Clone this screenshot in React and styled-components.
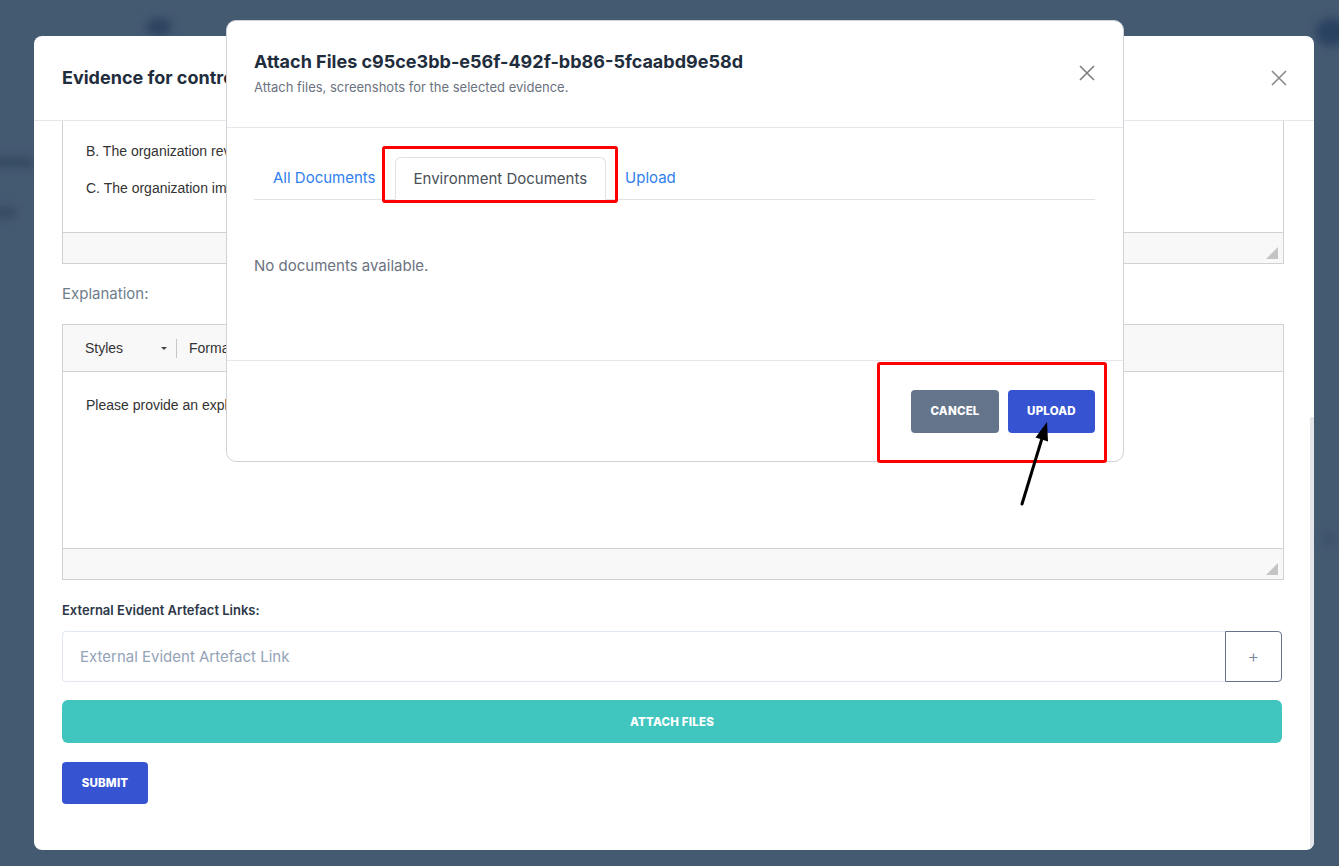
import React from "react";
import styled, { createGlobalStyle } from "styled-components";

const GlobalStyle = createGlobalStyle`
  html, body {
    margin: 0;
    padding: 0;
  }
  body {
    font-family: Inter, "Noto Sans", sans-serif;
    background: #445a71;
    overflow: hidden;
  }
  * {
    box-sizing: border-box;
  }
`;

const Backdrop = styled.div`
  position: relative;
  width: 1339px;
  height: 866px;
  background: #445a71;
  overflow: hidden;
  padding: 36px 0 0 34px;
`;

const Smudge = styled.span`
  position: absolute;
  top: ${(p) => p.top}px;
  left: ${(p) => p.left}px;
  width: ${(p) => p.w}px;
  height: ${(p) => p.h}px;
  border-radius: ${(p) => (p.round ? "50%" : "4px")};
  background: ${(p) => p.color || "#2f465e"};
  filter: blur(4px);
`;

/* ---------- evidence sheet (behind) ---------- */

const Sheet = styled.section`
  position: relative;
  width: 1280px;
  height: 814px;
  background: #fff;
  border-radius: 8px;
  display: flex;
  flex-direction: column;
  overflow: hidden;
`;

const SheetHeader = styled.header`
  height: 85px;
  flex-shrink: 0;
  border-bottom: 1px solid #e5e7eb;
  display: flex;
  align-items: center;
  justify-content: space-between;
  padding: 0 27px 0 28px;
`;

const SheetTitle = styled.h2`
  margin: 0;
  font-size: 18px;
  line-height: 24px;
  font-weight: 700;
  color: #1f2d3d;
`;

const CloseButton = styled.button`
  border: 0;
  background: none;
  padding: 0;
  width: 16px;
  height: 16px;
  display: flex;
  cursor: pointer;
  margin-top: ${(p) => p.offset || 0}px;
`;

const SheetBody = styled.div`
  flex: 1;
  display: flex;
  flex-direction: column;
  padding: 0 30px 0 28px;
`;

const Scrollbar = styled.div`
  position: absolute;
  left: 1276px;
  top: 381px;
  bottom: 0;
  width: 5px;
  background: #e5e5ea;
  border-radius: 2px 2px 0 0;
`;

const Editor = styled.div`
  border: 1px solid #d1d1d1;
  border-top: ${(p) => (p.cut ? "none" : "1px solid #d1d1d1")};
  display: flex;
  flex-direction: column;
`;

const Toolbar = styled.div`
  height: 47px;
  background: #f8f8f8;
  border-bottom: 1px solid #d1d1d1;
  display: flex;
  align-items: center;
  padding-left: 22px;
  font-family: "Liberation Sans", Arial, sans-serif;
  font-size: 14px;
  color: #333;
`;

const Combo = styled.div`
  display: flex;
  align-items: center;
  width: ${(p) => p.w}px;
  justify-content: space-between;
  padding-right: 9px;
`;

const Caret = styled.span`
  width: 0;
  height: 0;
  border-left: 3px solid transparent;
  border-right: 3px solid transparent;
  border-top: 3px solid #444;
`;

const ToolSep = styled.span`
  width: 1px;
  height: 19px;
  background: #c7c7c7;
  margin: 0 12px 0 0;
`;

const EditArea = styled.div`
  height: ${(p) => p.h}px;
  padding: ${(p) => p.pt}px 23px 0;
  display: flex;
  flex-direction: column;
  gap: 17px;
  font-family: "Liberation Sans", Arial, sans-serif;
  font-size: 14px;
  line-height: 20px;
  color: #333;
`;

const Para = styled.p`
  margin: 0;
`;

const StatusBar = styled.div`
  height: 31px;
  background: #f8f8f8;
  border-top: 1px solid #d1d1d1;
  display: flex;
  justify-content: flex-end;
  align-items: flex-end;
  padding: 0 5px 4px 0;
`;

const FieldLabel = styled.div`
  margin: ${(p) => p.m};
  font-size: ${(p) => (p.strong ? 13 : 15)}px;
  line-height: ${(p) => (p.strong ? 18 : 20)}px;
  font-weight: ${(p) => (p.strong ? 600 : 400)};
  color: ${(p) => (p.strong ? "#2d3748" : "#6f7d8c")};
`;

const LinkRow = styled.div`
  display: flex;
  height: 51px;
  margin-right: 2px;
`;

const LinkInput = styled.input`
  flex: 1;
  border: 1px solid #e2e8f0;
  border-right: none;
  border-radius: 4px 0 0 4px;
  padding: 0 17px;
  font-family: Inter, sans-serif;
  font-size: 15px;
  color: #2d3748;
  outline: none;
  &::placeholder {
    color: #94a3b8;
  }
`;

const AddButton = styled.button`
  width: 57px;
  border: 1px solid #64748b;
  border-radius: 0 4px 4px 0;
  background: #fff;
  color: #7a8699;
  font-size: 18px;
  font-family: Inter, sans-serif;
  font-weight: 300;
  cursor: pointer;
`;

const SolidButton = styled.button`
  border: 0;
  border-radius: ${(p) => p.radius || 4}px;
  background: ${(p) => p.bg};
  color: #fff;
  font-family: Inter, sans-serif;
  font-size: 11.5px;
  font-weight: 800;
  letter-spacing: 0.2px;
  height: ${(p) => p.h || 43}px;
  width: ${(p) => (p.w ? `${p.w}px` : "auto")};
  margin: ${(p) => p.m || 0};
  cursor: pointer;
`;

/* ---------- attach dialog (front) ---------- */

const Dialog = styled.div`
  position: absolute;
  top: 20px;
  left: 226px;
  width: 898px;
  height: 442px;
  background: #fff;
  border: 1px solid #cfd2d6;
  border-radius: 10px;
  display: flex;
  flex-direction: column;
`;

const DialogHeader = styled.header`
  height: 107px;
  flex-shrink: 0;
  border-bottom: 1px solid #e5e7eb;
  padding: 29px 28px 0 27px;
  display: flex;
  justify-content: space-between;
  align-items: flex-start;
`;

const DialogTitle = styled.h3`
  margin: 0;
  font-size: 18px;
  line-height: 24px;
  font-weight: 700;
  color: #1f2d3d;
`;

const DialogSub = styled.p`
  margin: 4px 0 0;
  font-size: 13px;
  line-height: 18px;
  color: #6b7280;
`;

const DialogBody = styled.div`
  flex: 1;
  padding: 29px 28px 0 27px;
`;

const Tabs = styled.nav`
  display: flex;
  align-items: flex-end;
  height: 43px;
  border-bottom: 1px solid #dee2e6;
`;

const Tab = styled.button`
  height: ${(p) => (p.active ? 43 : 42)}px;
  margin-bottom: ${(p) => (p.active ? -1 : 0)}px;
  padding: 0 18px;
  font-family: Inter, sans-serif;
  font-size: 15px;
  background: ${(p) => (p.active ? "#fff" : "transparent")};
  cursor: pointer;
  border: 1px solid ${(p) => (p.active ? "#dee2e6" : "transparent")};
  border-bottom-color: ${(p) => (p.active ? "#fff" : "transparent")};
  border-radius: 6px 6px 0 0;
  color: ${(p) => (p.active ? "#495057" : "#2f80ed")};
  line-height: 20px;
`;

const Empty = styled.p`
  margin: 56px 0 0;
  font-size: 15px;
  line-height: 20px;
  color: #6b7280;
`;

const DialogFooter = styled.footer`
  height: 101px;
  flex-shrink: 0;
  border-top: 1px solid #e5e7eb;
  display: flex;
  justify-content: flex-end;
  align-items: center;
  gap: 9px;
  padding: 0 28px 0 0;
`;

/* ---------- annotations ---------- */

const Highlight = styled.div`
  position: absolute;
  top: ${(p) => p.top}px;
  left: ${(p) => p.left}px;
  width: ${(p) => p.w}px;
  height: ${(p) => p.h}px;
  border: 3px solid #ff0000;
  border-radius: 3px;
  pointer-events: none;
`;

const ArrowMark = styled.svg`
  position: absolute;
  top: 415px;
  left: 1010px;
  overflow: visible;
`;

const CloseIcon = ({ color = "#8a8a8a" }) => (
  <svg width="16" height="16" viewBox="0 0 16 16">
    <path d="M1 1 L15 15 M15 1 L1 15" stroke={color} strokeWidth="1.6" fill="none" />
  </svg>
);

const Grip = () => (
  <svg width="12" height="12" viewBox="0 0 12 12">
    <path d="M12 0 L12 12 L0 12 Z" fill="#c4c4c4" />
  </svg>
);

const App = () => {
  return (
    <>
      <GlobalStyle />
      <Backdrop>
        <Smudge top={18} left={146} w={26} h={18} color="#2c4460" round />
        <Smudge top={158} left={-6} w={40} h={9} color="#34495f" />
        <Smudge top={208} left={-6} w={22} h={9} color="#34495f" />
        <Smudge top={18} left={1316} w={30} h={28} color="#2a4260" round />
        <Smudge top={533} left={1322} w={14} h={12} color="#3a5068" round />

        <Sheet>
          <SheetHeader>
            <SheetTitle>Evidence for control AC-1</SheetTitle>
            <CloseButton aria-label="Close">
              <CloseIcon />
            </CloseButton>
          </SheetHeader>
          <SheetBody>
            <Editor cut>
              <EditArea h={111} pt={20}>
                <Para>B. The organization reviews the policy.</Para>
                <Para>C. The organization implements it.</Para>
              </EditArea>
              <StatusBar>
                <Grip />
              </StatusBar>
            </Editor>

            <FieldLabel m="20px 0">Explanation:</FieldLabel>

            <Editor>
              <Toolbar>
                <Combo w={91}>
                  Styles <Caret />
                </Combo>
                <ToolSep />
                Format
              </Toolbar>
              <EditArea h={176} pt={23}>
                <Para>Please provide an explanation.</Para>
              </EditArea>
              <StatusBar>
                <Grip />
              </StatusBar>
            </Editor>

            <FieldLabel strong m="21px 0 12px">
              External Evident Artefact Links:
            </FieldLabel>
            <LinkRow>
              <LinkInput placeholder="External Evident Artefact Link" />
              <AddButton>+</AddButton>
            </LinkRow>
            <SolidButton bg="#40c5bf" radius={6} m="18px 2px 0 0">
              ATTACH FILES
            </SolidButton>
            <SolidButton bg="#3654d1" w={86} h={42} m="19px 0 0">
              SUBMIT
            </SolidButton>
          </SheetBody>
          <Scrollbar />
        </Sheet>

        <Dialog>
          <DialogHeader>
            <div>
              <DialogTitle>Attach Files c95ce3bb-e56f-492f-bb86-5fcaabd9e58d</DialogTitle>
              <DialogSub>Attach files, screenshots for the selected evidence.</DialogSub>
            </div>
            <CloseButton aria-label="Close" offset={15}>
              <CloseIcon color="#7d7d7d" />
            </CloseButton>
          </DialogHeader>
          <DialogBody>
            <Tabs>
              <Tab>All Documents</Tab>
              <Tab active>Environment Documents</Tab>
              <Tab>Upload</Tab>
            </Tabs>
            <Empty>No documents available.</Empty>
          </DialogBody>
          <DialogFooter>
            <SolidButton bg="#64748b" w={88}>
              CANCEL
            </SolidButton>
            <SolidButton bg="#3654d1" w={87}>
              UPLOAD
            </SolidButton>
          </DialogFooter>
        </Dialog>

        <Highlight top={146} left={382} w={236} h={57} />
        <Highlight top={362} left={877} w={230} h={101} />
        <ArrowMark width="50" height="95" viewBox="0 0 50 95">
          <line x1="12" y1="89" x2="31.5" y2="25" stroke="#000" strokeWidth="3" strokeLinecap="round" />
          <path d="M37 7 L38 26.5 L25.5 22.5 Z" fill="#000" />
        </ArrowMark>
      </Backdrop>
    </>
  );
};

export default App;
